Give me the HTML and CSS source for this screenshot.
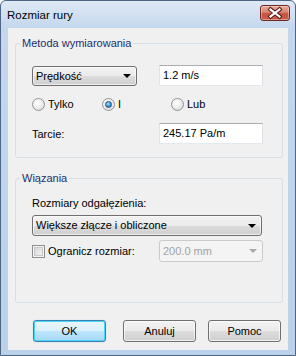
FILE: index.html
```html
<!DOCTYPE html>
<html lang="pl">
<head>
  <meta charset="UTF-8" />
  <meta name="viewport" content="width=device-width,initial-scale=1" />
  <title>Rozmiar rury</title>
  <link rel="stylesheet" href="styles.css">
</head>
<body>
  <div class="window">
    <div class="titlebar">
      <span class="title">Rozmiar rury</span>
      <button class="close" type="button" aria-label="Zamknij">
        <svg width="30" height="16" viewBox="0 0 30 16">
          <path d="M10.5 4.5 L19.5 11.5 M19.5 4.5 L10.5 11.5" stroke="#5a2119" stroke-width="4.2" stroke-linecap="square" fill="none"/>
          <path d="M10.5 4.5 L19.5 11.5 M19.5 4.5 L10.5 11.5" stroke="#ffffff" stroke-width="2.2" stroke-linecap="square" fill="none"/>
        </svg>
      </button>
    </div>

    <div class="client">
      <fieldset class="group group-method">
        <legend>Metoda wymiarowania</legend>

        <div class="row">
          <div class="cell">
            <div class="combo combo-short"><span>Prędkość</span><i class="arrow"></i></div>
          </div>
          <div class="field">1.2 m/s</div>
        </div>

        <div class="radios">
          <label class="opt opt-first"><span class="radio"></span>Tylko</label>
          <label class="opt opt-second"><span class="radio checked"></span>I</label>
          <label class="opt"><span class="radio"></span>Lub</label>
        </div>

        <div class="row row-friction">
          <div class="cell">Tarcie:</div>
          <div class="field">245.17 Pa/m</div>
        </div>
      </fieldset>

      <fieldset class="group group-bind">
        <legend>Wiązania</legend>

        <div class="caption">Rozmiary odgałęzienia:</div>
        <div class="combo combo-wide"><span>Większe złącze i obliczone</span><i class="arrow"></i></div>

        <div class="row row-limit">
          <label class="cell check-label"><span class="checkbox"></span>Ogranicz rozmiar:</label>
          <div class="combo combo-disabled"><span>200.0 mm</span><i class="arrow"></i></div>
        </div>
      </fieldset>

      <div class="buttons">
        <button class="btn btn-default" type="button">OK</button>
        <button class="btn btn-cancel" type="button">Anuluj</button>
        <button class="btn" type="button">Pomoc</button>
      </div>
    </div>
  </div>
</body>
</html>
```

FILE: styles.css
```css
body {
  margin: 0;
  font-family: "Liberation Sans", Arial, sans-serif;
  font-size: 11px;
  color: #000;
  background: #fff;
}

.window {
  width: 296px;
  height: 356px;
  box-sizing: border-box;
  border: 1px solid #4d6685;
  border-radius: 6px 6px 0 0;
  background: linear-gradient(to bottom, #dfe9f5 0, #c4d7ed 27px, #bbd1ea 100%);
  padding: 0 7px 5px;
  display: flex;
  flex-direction: column;
}

/* title bar */
.titlebar {
  height: 27px;
  margin: 0 -7px;
  padding: 4px 5px 0 6px;
  box-sizing: border-box;
  display: flex;
  align-items: flex-start;
  justify-content: space-between;
}
.title {
  align-self: center;
  margin-top: -4px;
  font-size: 11.5px;
  color: #000;
}
.close {
  width: 30px;
  height: 16px;
  padding: 0;
  border: 1px solid #6e2a22;
  border-radius: 3px;
  background: linear-gradient(to bottom, #e9ab9c 0%, #d98171 45%, #c75341 55%, #c9604c 100%);
  box-shadow: inset 0 0 0 1px rgba(255,255,255,0.35);
  display: flex;
  align-items: center;
  justify-content: center;
}
.close svg {
  display: block;
  margin: -1px;
}

/* client area */
.client {
  flex: 1;
  background: #f0f0f0;
  padding: 0 5px 0 7px;
  display: flex;
  flex-direction: column;
}

.group {
  margin: 9px 0 0;
  border: 1px solid #d5dfe5;
  border-radius: 3px;
  padding: 15px 0 13px 16px;
  min-width: 0;
}
.group legend {
  padding: 0 2px;
  margin-left: -12px;
  line-height: 13px;
  color: #1d2f6b;
}
.group-bind {
  margin-top: 14px;
  padding-top: 12px;
  padding-bottom: 40px;
}

.row {
  display: flex;
  align-items: center;
  height: 21px;
}
.cell {
  width: 127px;
  flex: none;
  display: flex;
  align-items: center;
}
.row-friction {
  margin-top: 12px;
}
.row-limit {
  margin-top: 4px;
  height: 22px;
}

/* text fields */
.field {
  width: 104px;
  height: 21px;
  box-sizing: border-box;
  border: 1px solid;
  border-color: #abadb3 #dbdfe6 #e3e9ef #e2e3ea;
  background: #fff;
  padding: 0 3px;
  line-height: 19px;
}

/* combo boxes */
.combo {
  position: relative;
  box-sizing: border-box;
  height: 21px;
  border: 1px solid #707070;
  border-radius: 3px;
  background: linear-gradient(to bottom, #f2f2f2 0%, #ebebeb 50%, #dddddd 50%, #cfcfcf 100%);
  box-shadow: inset 0 0 0 1px rgba(255,255,255,0.6);
  padding: 0 3px;
  line-height: 19px;
  display: flex;
  align-items: center;
  justify-content: space-between;
}
.combo-short {
  width: 105px;
  height: 20px;
  margin-top: 1px;
}
.combo-wide {
  width: 230px;
  margin-top: 5px;
}
.combo-disabled {
  width: 104px;
  height: 22px;
  border-color: #c9cbcd;
  background: #f4f4f4;
  box-shadow: none;
  color: #a3a3a3;
}
.arrow {
  width: 0;
  height: 0;
  margin-right: 2px;
  border-left: 4px solid transparent;
  border-right: 4px solid transparent;
  border-top: 4px solid #000;
}
.combo-disabled .arrow {
  border-top-color: #a8a8a8;
}

.caption {
  line-height: 13px;
}

/* radio buttons */
.radios {
  display: flex;
  align-items: center;
  height: 13px;
  margin-top: 12px;
}
.opt {
  display: flex;
  align-items: center;
  gap: 3px;
  line-height: 13px;
}
.opt-first {
  width: 70px;
}
.opt-second {
  width: 69px;
}
.radio {
  position: relative;
  width: 13px;
  height: 13px;
  box-sizing: border-box;
  border: 1px solid #959595;
  border-radius: 50%;
  background: radial-gradient(circle at 40% 35%, #ffffff 0%, #ececec 50%, #d0d0d0 100%);
}
.radio.checked::after {
  content: "";
  position: absolute;
  left: 2px;
  top: 2px;
  width: 5px;
  height: 5px;
  border-radius: 50%;
  border: 1px solid #1d4f7e;
  background: radial-gradient(circle at 40% 35%, #a9e1ff 0%, #3a9ad8 55%, #175c98 100%);
}

/* checkbox */
.check-label {
  gap: 3px;
}
.checkbox {
  width: 13px;
  height: 13px;
  box-sizing: border-box;
  border: 1px solid #8f8f8f;
  background: #f4f4f4;
  box-shadow: inset 0 0 0 1px #f4f4f4, inset 0 0 0 2px #c9c9c9;
  background-image: linear-gradient(135deg, #cfcfcf, #fbfbfb);
}

/* dialog buttons */
.buttons {
  display: flex;
  margin: 17px 0 0 18px;
}
.btn {
  width: 73px;
  height: 22px;
  padding: 0;
  font-family: inherit;
  font-size: 11px;
  color: #000;
  border: 1px solid #707070;
  border-radius: 3px;
  background: linear-gradient(to bottom, #f2f2f2 0%, #ebebeb 50%, #dddddd 50%, #cfcfcf 100%);
  box-shadow: inset 0 0 0 1px rgba(255,255,255,0.7);
}
.btn-default {
  border-color: #3c7fb1;
  background: linear-gradient(to bottom, #eaf6fd 0%, #d9f0fc 50%, #bee6fd 50%, #a7d9f5 100%);
  box-shadow: inset 0 0 0 1px #48d6fb, 0 0 1px #80c4ef;
}
.btn-cancel {
  margin: 0 12px 0 17px;
}
```
